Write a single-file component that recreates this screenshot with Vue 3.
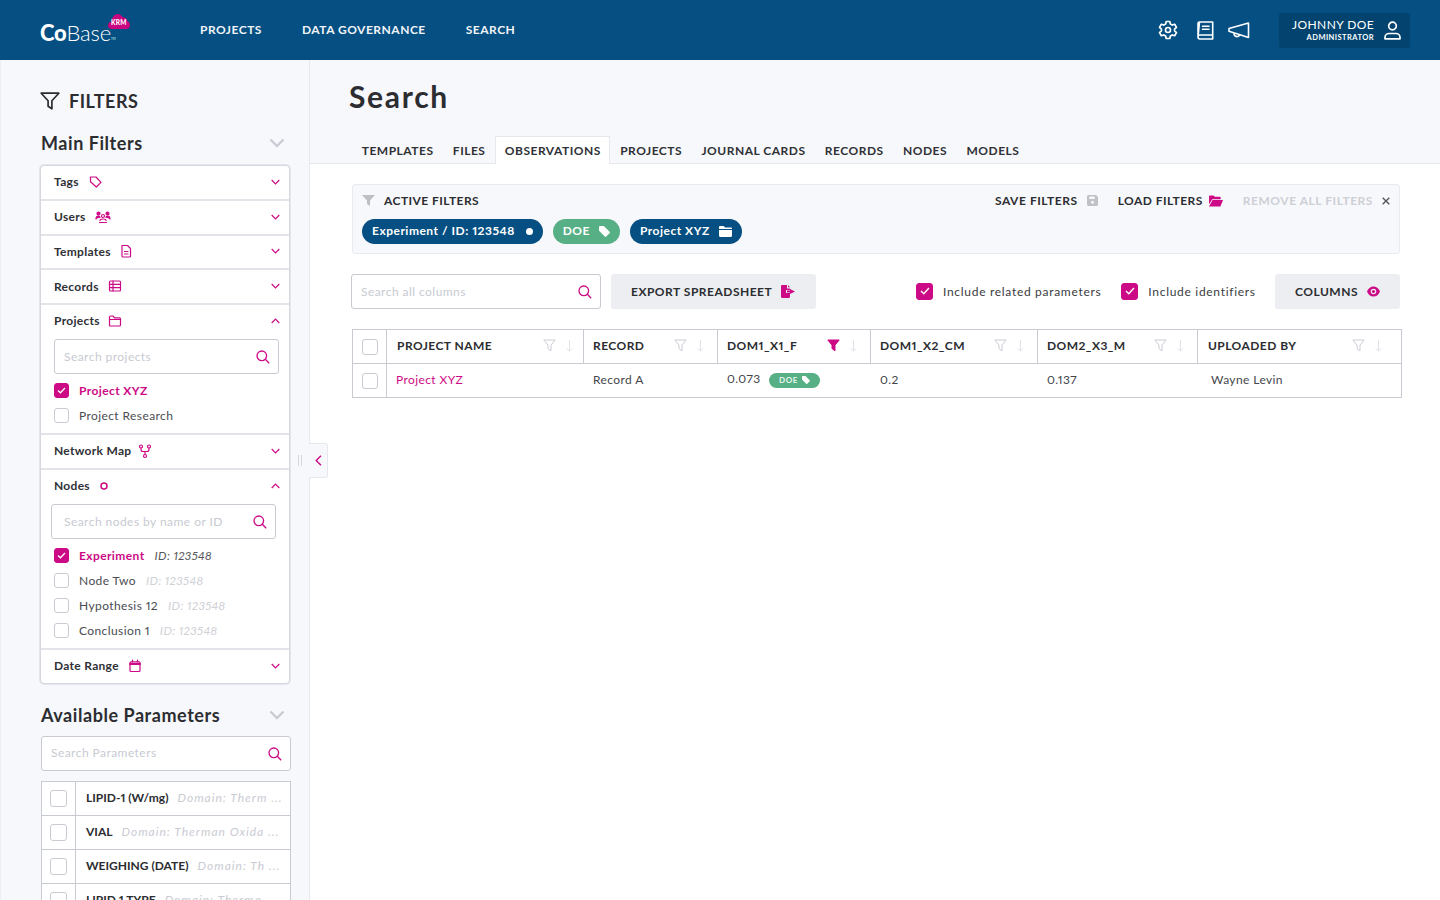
<template>
  <div class="app">
    <header class="topbar">
      <div class="logo">
        <span class="logo-text"><b>Co</b>Base</span><span class="logo-tm">TM</span>
        <span class="logo-cloud">
          <svg width="22" height="16" viewBox="0 0 22 16"><path d="M0 11.500C0 9.300 1.400 7.800 3.400 7.400 4 3.200 6.800 0 9.800 0c2.200 0 3.800 1.300 4.700 3.200 2.600-.3 4.600 1.500 5 4 1.500.5 2.500 2 2.500 3.700 0 2.400-1.800 4.100-4 4.100H3.800C1.700 15 0 13.500 0 11.500z" fill="#c9057f"/></svg>
          <span class="krm">KRM</span>
        </span>
      </div>
      <nav class="main-nav">
        <a v-for="item in navItems" :key="item">{{ item }}</a>
      </nav>
      <div class="top-icons">
        <svg class="gear" width="20" height="20" viewBox="0 0 24 24" fill="none" stroke="#fff" stroke-width="2" stroke-linejoin="round"><circle cx="12" cy="12" r="3"/><path d="M9.800 1.800h4.400l.6 3 2.300 1.300 2.900-1 2.200 3.800-2.300 2v2.200l2.300 2-2.200 3.800-2.900-1-2.300 1.300-.6 3H9.800l-.6-3-2.300-1.300-2.900 1-2.200-3.800 2.300-2v-2.200l-2.300-2 2.200-3.800 2.900 1 2.300-1.300z"/></svg>
        <svg class="book" width="17" height="19" viewBox="0 0 17 19" fill="none" stroke="#fff" stroke-width="1.600" stroke-linejoin="round" stroke-linecap="round"><path d="M2.500 1h13.200v13H2.900C1.800 14 1 14.800 1 15.800S1.800 18 2.900 18h12.800v-4M1 15.800V2.500C1 1.700 1.700 1 2.500 1z"/><path d="M5.500 5.300h6.500M5.500 8.300h6.500"/></svg>
        <svg class="horn" width="22" height="17" viewBox="0 0 22 17" fill="none" stroke="#fff" stroke-width="1.600" stroke-linejoin="round"><path d="M20.500 1v14.500L1 9.300V6.500z"/><path d="M6 11c0 2.300 1.300 3.600 3 3.600 1.400 0 2.400-.8 2.700-2"/></svg>
        <div class="user-box">
          <div class="user-text">
            <div class="user-name">JOHNNY DOE</div>
            <div class="user-role">ADMINISTRATOR</div>
          </div>
          <svg width="17" height="19" viewBox="0 0 17 19" fill="none" stroke="#fff" stroke-width="1.700"><circle cx="8.500" cy="5" r="3.800"/><path d="M1 17.800v-1.300c0-2.500 2-4 4-4h7c2 0 4 1.500 4 4v1.300z" stroke-linejoin="round"/></svg>
        </div>
      </div>
    </header>

    <div class="body">
      <aside class="sidebar">
        <h2 class="filters-title">
          <svg width="20" height="18" viewBox="0 0 20 18" fill="none" stroke="#2b2d31" stroke-width="1.700" stroke-linejoin="round"><path d="M1.200 1.200h17.600l-6.900 7.600v8l-3.800-2.600V8.800z"/></svg>
          FILTERS
        </h2>
        <div class="section-head main-head">
          <span>Main Filters</span>
          <svg width="16" height="10" viewBox="0 0 16 10" fill="none" stroke="#c9ccd4" stroke-width="2.400"><path d="M1.500 1.500L8 8l6.500-6.500"/></svg>
        </div>

        <div class="filter-panel">
          <div v-for="group in filterGroups" :key="group.name" class="filter-group">
            <div class="group-head">
              <span class="group-name">{{ group.name }}</span>
              <svg class="group-icon" :style="{ marginLeft: group.gap + 'px' }" :width="group.w || 16" height="16" :viewBox="`0 0 ${group.w || 16} 16`" fill="none" stroke="#cc0a85" stroke-width="1.200" stroke-linejoin="round" stroke-linecap="round" v-html="group.icon"></svg>
              <svg class="chev" width="9" height="6" viewBox="0 0 9 6" fill="none" stroke="#cc0a85" stroke-width="1.200">
                <path :d="group.items ? 'M.7 5L4.500 1.200 8.300 5' : 'M.7 1L4.500 4.800 8.300 1'"/>
              </svg>
            </div>
            <div v-if="group.items" class="group-body">
              <label class="search-box" :class="{ shifted: group.shifted }">
                <span class="placeholder">{{ group.placeholder }}</span>
                <svg class="search-ico" width="14" height="14" viewBox="0 0 14 14" fill="none" stroke="#cc0a85" stroke-width="1.300"><circle cx="5.800" cy="5.800" r="4.800"/><path d="M9.300 9.300l3.900 3.900"/></svg>
              </label>
              <div class="check-list">
                <div v-for="it in group.items" :key="it.label" class="check-row" :class="{ on: it.on }">
                  <span class="box" :class="{ checked: it.on }">
                    <svg v-if="it.on" width="9" height="7" viewBox="0 0 9 7" fill="none" stroke="#fff" stroke-width="1.300"><path d="M1 3.500l2.400 2.300L8 1"/></svg>
                  </span>
                  <span class="check-label">{{ it.label }}</span>
                  <em v-if="it.id" class="check-id">{{ it.id }}</em>
                </div>
              </div>
            </div>
          </div>
        </div>

        <div class="section-head avail-head">
          <span>Available Parameters</span>
          <svg width="16" height="10" viewBox="0 0 16 10" fill="none" stroke="#c9ccd4" stroke-width="2.400"><path d="M1.500 1.500L8 8l6.500-6.500"/></svg>
        </div>
        <label class="search-box param-search">
          <span class="placeholder">Search Parameters</span>
          <svg class="search-ico" width="14" height="14" viewBox="0 0 14 14" fill="none" stroke="#cc0a85" stroke-width="1.300"><circle cx="5.800" cy="5.800" r="4.800"/><path d="M9.300 9.300l3.900 3.900"/></svg>
        </label>
        <div class="param-list">
          <div v-for="p in params" :key="p.name" class="param-row">
            <div class="param-check"><span class="box big"></span></div>
            <div class="param-text"><b>{{ p.name }}</b><em>{{ p.domain }}</em></div>
          </div>
        </div>
        <div class="grip"></div>
        <button class="collapse">
          <svg width="7" height="11" viewBox="0 0 7 11" fill="none" stroke="#cc0a85" stroke-width="1.400"><path d="M6 .8L1.200 5.500 6 10.200"/></svg>
        </button>
      </aside>

      <main class="content">
        <div class="page-head">
          <h1>Search</h1>
          <div class="tabs">
            <a v-for="tab in tabs" :key="tab" class="tab" :class="{ active: tab === 'OBSERVATIONS' }">{{ tab }}</a>
          </div>
        </div>

        <div class="page-body">
          <section class="active-filters">
            <div class="af-top">
              <svg width="13" height="11" viewBox="0 0 13 11"><path d="M0 0h13L8 5.500V11L5 9V5.500z" fill="#bdbfc4"/></svg>
              <span class="af-title">ACTIVE FILTERS</span>
              <div class="af-actions">
                <span class="af-act">SAVE FILTERS
                  <svg width="11" height="11" viewBox="0 0 11 11"><path d="M1.500 0H9l2 2v7.500c0 .8-.7 1.500-1.500 1.500h-8C.7 11 0 10.300 0 9.500v-8C0 .7.700 0 1.500 0z" fill="#bfc1c6"/><rect x="2.300" y="1.500" width="5.500" height="2.500" fill="#f7f8fc"/><circle cx="5.500" cy="7.300" r="1.500" fill="#f7f8fc"/></svg>
                </span>
                <span class="af-act load">LOAD FILTERS
                  <svg width="14" height="12" viewBox="0 0 15 12"><path d="M0 1.200C0 .5.500 0 1.200 0h3.600l1.500 1.500h5c.7 0 1.200.5 1.200 1.200V4H3.500L0 9.500z" fill="#cc0a85"/><path d="M3.800 5H15l-2.800 7H0z" fill="#cc0a85"/></svg>
                </span>
                <span class="af-act off">REMOVE ALL FILTERS
                  <svg width="8" height="8" viewBox="0 0 8 8" stroke="#55575c" stroke-width="1.400"><path d="M.7.700l6.600 6.600M7.300.700L.7 7.300"/></svg>
                </span>
              </div>
            </div>
            <div class="chips">
              <span class="chip navy">Experiment / ID: 123548 <i class="dot"></i></span>
              <span class="chip green">DOE
                <svg width="11" height="11" viewBox="0 0 11 11"><path d="M0 1.200C0 .5.500 0 1.200 0h3.600l5.800 5.800c.4.400.4 1 0 1.400l-3.400 3.400c-.4.400-1 .4-1.400 0L0 4.800z" fill="#fff"/></svg>
              </span>
              <span class="chip navy">Project XYZ
                <svg width="13" height="11" viewBox="0 0 13 11"><path d="M0 1.200C0 .5.500 0 1.200 0h3.500L6 1.500h5.800c.7 0 1.200.5 1.200 1.200v.3H0z" fill="#fff"/><path d="M0 4h13v5.800c0 .7-.5 1.200-1.200 1.200H1.200C.5 11 0 10.500 0 9.800z" fill="#fff"/></svg>
              </span>
            </div>
          </section>

          <div class="toolbar">
            <label class="search-box all-search">
              <span class="placeholder">Search all columns</span>
              <svg class="search-ico" width="14" height="14" viewBox="0 0 14 14" fill="none" stroke="#cc0a85" stroke-width="1.300"><circle cx="5.800" cy="5.800" r="4.800"/><path d="M9.300 9.300l3.900 3.900"/></svg>
            </label>
            <button class="grey-btn export">EXPORT SPREADSHEET
              <svg width="14" height="13" viewBox="0 0 14 13"><path d="M0 1.200C0 .5.500 0 1.200 0H6v3.500h3V5H5v3h4v3.800c0 .7-.5 1.200-1.200 1.200H1.200C.5 13 0 12.500 0 11.800z" fill="#cc0a85"/><path d="M7 0l2 2.200H7zM9 4l5 2.500L9 9V7.500H6v-2h3z" fill="#cc0a85"/></svg>
            </button>
            <div class="toggle first"><span class="box checked lg"><svg width="10" height="8" viewBox="0 0 10 8" fill="none" stroke="#fff" stroke-width="1.400"><path d="M1 4l2.800 2.700L9 1"/></svg></span>Include related parameters</div>
            <div class="toggle second"><span class="box checked lg"><svg width="10" height="8" viewBox="0 0 10 8" fill="none" stroke="#fff" stroke-width="1.400"><path d="M1 4l2.800 2.700L9 1"/></svg></span>Include identifiers</div>
            <button class="grey-btn columns">COLUMNS
              <svg width="14" height="11" viewBox="0 0 14 11"><path d="M7 0c3.200 0 5.800 2.200 7 5.500C12.800 8.800 10.200 11 7 11S1.200 8.800 0 5.500C1.200 2.200 3.800 0 7 0z" fill="#cc0a85"/><circle cx="7" cy="5.500" r="3" fill="#eceef2"/><circle cx="7" cy="5.500" r="1.700" fill="#cc0a85"/></svg>
            </button>
          </div>

          <table class="grid">
            <colgroup>
              <col v-for="w in colWidths" :key="w.k" :style="{ width: w.v + 'px' }">
            </colgroup>
            <thead>
              <tr>
                <th class="chk"><span class="box big"></span></th>
                <th v-for="col in columns" :key="col.name">
                  <div class="th-in">
                    <span>{{ col.name }}</span>
                    <span class="th-icons">
                      <svg width="13" height="13" viewBox="0 0 13 13" :fill="col.active ? '#cc0a85' : 'none'" :stroke="col.active ? '#cc0a85' : '#c9ccd4'" stroke-width="1" stroke-linejoin="round"><path d="M.8 1h11.400L8 6.200v5.600L5 9.600V6.200z"/></svg>
                      <svg width="7" height="12" viewBox="0 0 7 12" fill="none" stroke="#e0e2e7" stroke-width="1"><path d="M3.500 0v11M.7 8.300l2.800 2.900 2.800-2.900"/></svg>
                    </span>
                  </div>
                </th>
              </tr>
            </thead>
            <tbody>
              <tr>
                <td class="chk"><span class="box big"></span></td>
                <td class="link">Project XYZ</td>
                <td>Record A</td>
                <td>0.073 <span class="mini-tag">DOE
                  <svg width="8" height="8" viewBox="0 0 11 11"><path d="M0 1.200C0 .5.500 0 1.200 0h3.600l5.800 5.800c.4.400.4 1 0 1.400l-3.400 3.400c-.4.400-1 .4-1.400 0L0 4.800z" fill="#fff"/></svg></span></td>
                <td>0.2</td>
                <td>0.137</td>
                <td class="uploader">Wayne Levin</td>
              </tr>
            </tbody>
          </table>
        </div>
      </main>
    </div>
  </div>
</template>

<script setup>
const navItems = ['PROJECTS', 'DATA GOVERNANCE', 'SEARCH']
const tabs = ['TEMPLATES', 'FILES', 'OBSERVATIONS', 'PROJECTS', 'JOURNAL CARDS', 'RECORDS', 'NODES', 'MODELS']

const filterGroups = [
  { name: 'Tags', gap: 9, icon: '<path d="M2.500 3h5.500l5 5.300-4.700 4.700-5.800-5.300z"/>' },
  { name: 'Users', gap: 9, w: 16, icon: '<circle cx="3.500" cy="4.500" r="1.500" fill="#cc0a85"/><circle cx="12.500" cy="4.500" r="1.500" fill="#cc0a85"/><circle cx="8" cy="7" r="1.500"/><path d="M1 10c0-2 1-3 2.500-3S5 7.500 5 8.500M15 10c0-2-1-3-2.500-3S11 7.500 11 8.500" fill="#cc0a85"/><path d="M4.500 13.500h7M5 11.500c0-1 1-1.500 3-1.500s3 .5 3 1.500"/>' },
  { name: 'Templates', gap: 7, icon: '<path d="M4 2.500h5.500L12.500 5.500V13c0 .6-.4 1-1 1H5c-.6 0-1-.4-1-1z"/><path d="M6.500 8.500h3.500M6.500 11h3.500"/>' },
  { name: 'Records', gap: 8, icon: '<rect x="2.500" y="3" width="11" height="10" rx="1"/><path d="M2.500 6.300h11M2.500 9.700h11M6 3v10"/>' },
  {
    name: 'Projects', gap: 7, placeholder: 'Search projects',
    icon: '<path d="M2.500 4c0-.6.400-1 1-1H6l1.500 1.800h5c.6 0 1 .4 1 1V12c0 .6-.4 1-1 1h-9c-.6 0-1-.4-1-1z"/><path d="M2.500 6.500h11"/>',
    items: [{ label: 'Project XYZ', on: true }, { label: 'Project Research' }]
  },
  { name: 'Network Map', gap: 5, icon: '<circle cx="4" cy="3.500" r="1.500"/><circle cx="12" cy="3.500" r="1.500"/><circle cx="8" cy="13" r="1.500"/><path d="M4 5v1.500c0 1 1 2 2 2h4c1 0 2-1 2-2V5M8 8.500v3"/>' },
  {
    name: 'Nodes', gap: 6, placeholder: 'Search nodes by name or ID', shifted: true,
    icon: '<circle cx="8" cy="8" r="3" stroke-width="1.500"/>',
    items: [
      { label: 'Experiment', id: 'ID: 123548', on: true },
      { label: 'Node Two', id: 'ID: 123548' },
      { label: 'Hypothesis 12', id: 'ID: 123548' },
      { label: 'Conclusion 1', id: 'ID: 123548' }
    ]
  },
  { name: 'Date Range', gap: 8, icon: '<rect x="3" y="3.800" width="10" height="9.700" rx="1"/><path d="M3 6h10" stroke-width="2"/><path d="M5.500 2v2M10.500 2v2"/>' }
]

const params = [
  { name: 'LIPID-1 (W/mg)', domain: 'Domain: Therm ...' },
  { name: 'VIAL', domain: 'Domain: Therman Oxida ...' },
  { name: 'WEIGHING (DATE)', domain: 'Domain: Th ...' },
  { name: 'LIPID 1 TYPE', domain: 'Domain: Therma ...' }
]

const columns = [
  { name: 'PROJECT NAME' },
  { name: 'RECORD' },
  { name: 'DOM1_X1_F', active: true },
  { name: 'DOM1_X2_CM' },
  { name: 'DOM2_X3_M' },
  { name: 'UPLOADED BY' }
]
const colWidths = [34, 197, 134, 153, 167, 160, 204].map((v, k) => ({ v, k }))
</script>

<style>
html, body { margin: 0; background: #fff; }
</style>

<style scoped>
.app {
  width: 1440px;
  height: 900px;
  overflow: hidden;
  font-family: Lato, "Noto Sans", sans-serif;
  font-variant-numeric: proportional-nums;
  color: #2b2d31;
}
.topbar {
  height: 60px;
  background: #054f82;
  display: flex;
  align-items: center;
  color: #fff;
}
.logo {
  position: relative;
  width: 160px;
  margin-left: 40px;
  height: 60px;
  display: flex;
  align-items: center;
}
.logo-text {
  font-size: 22px;
  font-weight: 300;
  padding-top: 5px;
  letter-spacing: -0.2px;
}
.logo-text b { font-weight: 900; }
.logo-tm { font-size: 3px; margin-top: 17px; color: #cfe; }
.logo-cloud {
  position: absolute;
  left: 68px;
  top: 14px;
  width: 22px;
  height: 16px;
}
.krm {
  position: absolute;
  left: 3px;
  top: 5px;
  font-size: 6.500px;
  font-weight: 900;
  letter-spacing: .2px;
  line-height: 8px;
}
.main-nav { display: flex; gap: 40px; padding-bottom: 2px; }
.main-nav a {
  font-size: 12px;
  font-weight: 700;
  letter-spacing: .5px;
  color: #f1f4f8;
}
.top-icons {
  margin-left: auto;
  margin-right: 30px;
  display: flex;
  align-items: center;
}
.book { margin-left: 19px; }
.horn { margin-left: 14px; }
.user-box {
  margin-left: 29px;
  width: 131px;
  height: 35px;
  background: #03436f;
  border-radius: 3px;
  display: flex;
  align-items: center;
  justify-content: flex-end;
  padding-right: 9px;
  box-sizing: border-box;
  gap: 10px;
}
.user-text { text-align: right; }
.user-name { font-size: 12px; letter-spacing: .4px; line-height: 15px; font-weight: 400; }
.user-role { font-size: 7.500px; letter-spacing: .45px; line-height: 11px; font-weight: 700; }

.body { display: flex; height: 840px; }
.sidebar {
  position: relative;
  width: 310px;
  flex: none;
  box-sizing: border-box;
  padding: 0 18px 0 40px;
  background: #f7f8fc;
  border-left: 1px solid #eceef3;
  border-right: 1px solid #e6e8ee;
}
.filters-title {
  margin: 31px 0 0 -1px;
  display: flex;
  align-items: center;
  gap: 9px;
  height: 20px;
  font-size: 18px;
  font-weight: 700;
  letter-spacing: .5px;
  color: #2b2d31;
}
.section-head {
  display: flex;
  justify-content: space-between;
  align-items: center;
  font-size: 18px;
  font-weight: 700;
  letter-spacing: .55px;
  padding-right: 6px;
  height: 24px;
}
.main-head { margin-top: 20px; }
.avail-head { margin-top: 19px; }
.filter-panel {
  margin-top: 10px;
  margin-left: -1px;
  width: 250px;
  box-sizing: border-box;
  background: #fff;
  border: 1px solid #d6d8df;
  border-radius: 4px;
  box-shadow: 0 0 0 1px #e4e6ec;
}
.filter-group + .filter-group { border-top: 2px solid #e2e4ea; }
.group-head {
  box-sizing: border-box;
  height: 32.750px;
  padding: 0 9px 1px 13px;
  display: flex;
  align-items: center;
}
.group-name { font-size: 12px; font-weight: 700; letter-spacing: .3px; color: #2f3136; }
.chev { margin-left: auto; }
.group-body { padding: 1.250px 10px 5px 13px; }
.search-box {
  position: relative;
  display: flex;
  align-items: center;
  box-sizing: border-box;
  height: 35px;
  background: #fff;
  border: 1px solid #c9cbd3;
  border-radius: 3px;
  padding-left: 9px;
}
.search-box.shifted { margin-left: -3px; margin-right: 3px; padding-left: 12px; }
.placeholder { font-size: 12px; letter-spacing: .45px; color: #c8cad2; font-weight: 400; }
.search-ico { position: absolute; right: 8px; top: 10px; }
.check-list { margin-top: 4px; }
.check-row { display: flex; align-items: center; height: 25px; font-size: 12px; letter-spacing: .4px; color: #4a4c52; }
.check-row.on { color: #cc0a85; font-weight: 700; }
.box {
  box-sizing: border-box;
  flex: none;
  width: 15px;
  height: 15px;
  border: 1px solid #c9cbd3;
  border-radius: 3px;
  background: #fff;
  display: inline-flex;
  align-items: center;
  justify-content: center;
}
.box.checked { background: #cc0a85; border-color: #cc0a85; }
.box.big { width: 16px; height: 16px; }
.box.lg { width: 17px; height: 17px; }
.check-label { margin-left: 10px; }
.check-id { margin-left: 10px; font-style: italic; font-weight: 400; color: #cfd1d7; letter-spacing: .35px; }
.check-row.on .check-id { color: #55575c; }

.param-search { margin-top: 9px; height: 35px; padding: 0 0 2px 9px; }
.param-list {
  margin-top: 10px;
  border: 1px solid #c9cbd3;
  background: #fff;
}
.param-row { display: flex; height: 33px; }
.param-row + .param-row { border-top: 1px solid #c9cbd3; }
.param-check {
  width: 33px;
  flex: none;
  border-right: 1px solid #c9cbd3;
  display: flex;
  align-items: center;
  justify-content: center;
}
.param-check .box { width: 17px; height: 17px; }
.param-text {
  padding: 0 8px 2px 10px;
  display: flex;
  align-items: center;
  gap: 9px;
  white-space: nowrap;
  overflow: hidden;
  font-size: 12px;
}
.param-text b { font-weight: 700; letter-spacing: 0; }
.param-text em { color: #c9cbd3; letter-spacing: 1px; }
.grip {
  position: absolute;
  left: 297px;
  top: 395px;
  width: 2px;
  height: 11px;
  border-left: 1px solid #d6d8de;
  border-right: 1px solid #d6d8de;
}
.collapse {
  position: absolute;
  left: 308px;
  top: 383px;
  z-index: 2;
  width: 19px;
  height: 35px;
  padding: 0;
  background: #f7f8fc;
  border: 1px solid #e6e8ee;
  border-left: none;
  border-radius: 0 3px 3px 0;
  display: flex;
  align-items: center;
  justify-content: center;
}

.content { flex: 1; min-width: 0; }
.page-head {
  height: 104px;
  box-sizing: border-box;
  background: #f7f8fc;
  border-bottom: 1px solid #e6e8ee;
  padding: 18px 0 0 39px;
  position: relative;
}
h1 {
  margin: 0;
  font-size: 30px;
  line-height: 36px;
  font-weight: 700;
  letter-spacing: 1.700px;
  color: #2b2d31;
}
.tabs {
  display: flex;
  position: absolute;
  left: 42px;
  bottom: -1px;
}
.tab {
  height: 27px;
  line-height: 27px;
  padding: 0 8.700px;
  font-size: 12px;
  font-weight: 700;
  letter-spacing: .5px;
  color: #2f3136;
  border: 1px solid transparent;
  border-bottom: none;
}
.tab.active { background: #fff; border-color: #e6e8ee; }

.page-body { padding: 20px 38px 0 42px; }
.active-filters {
  height: 70px;
  box-sizing: border-box;
  width: 1048px;
  background: #f7f8fc;
  border: 1px solid #e9ebf0;
  border-radius: 3px;
  padding: 0 9px;
}
.af-top { display: flex; align-items: center; height: 31px; padding-bottom: 2px; }
.af-title { margin-left: 9px; font-size: 12px; font-weight: 700; letter-spacing: .45px; }
.af-actions { margin-left: auto; display: flex; align-items: center; gap: 20px; }
.af-act {
  display: flex;
  align-items: center;
  gap: 9px;
  font-size: 12px;
  font-weight: 700;
  letter-spacing: .55px;
}
.af-act.load { gap: 6px; letter-spacing: .45px; }
.af-act.off { color: #cdcfd5; }
.chips { display: flex; gap: 10px; margin-top: 1px; }
.chip {
  box-sizing: border-box;
  height: 25px;
  border-radius: 13px;
  display: inline-flex;
  align-items: center;
  gap: 9px;
  padding: 0 10px 2px;
  font-size: 12px;
  font-weight: 700;
  letter-spacing: .5px;
  color: #fff;
}
.chip svg, .dot { position: relative; top: 1px; }
.chip.navy { background: #054f82; }
.chip.green { background: #57b085; }
.dot { width: 7px; height: 7px; border-radius: 50%; background: #fff; margin-left: 2px; }

.toolbar { display: flex; align-items: center; margin: 20px 2px 0 -1px; }
.all-search { width: 250px; }
.grey-btn {
  height: 35px;
  padding: 0 20px;
  border: none;
  border-radius: 3px;
  background: #eceef2;
  font-family: inherit;
  font-size: 12px;
  font-weight: 700;
  letter-spacing: .5px;
  color: #2b2d31;
  display: inline-flex;
  align-items: center;
  gap: 9px;
}
.export { margin-left: 10px; width: 205px; padding-right: 0; }
.toggle {
  display: flex;
  align-items: center;
  gap: 10px;
  padding-bottom: 1px;
  font-size: 12px;
  letter-spacing: .7px;
  color: #3a3c41;
}
.toggle.first { margin-left: 100px; }
.toggle.second { margin-left: 20px; }
.columns { margin-left: auto; width: 125px; }

.grid {
  margin-top: 20px;
  width: 1049px;
  table-layout: fixed;
  border-collapse: collapse;
  font-size: 12px;
}
.grid th, .grid td { border: 1px solid #c9cbd3; padding: 0 10px 2px 9px; height: 34px; box-sizing: border-box; text-align: left; }
.grid th { font-weight: 700; letter-spacing: .45px; color: #2b2d31; }
.grid th:nth-child(2), .grid th:last-child { padding-left: 10px; }
.grid td { letter-spacing: .4px; color: #44464b; border-left-color: transparent; border-right-color: transparent; font-weight: 400; }
.grid .chk { padding: 0; text-align: center; line-height: 0; }
.grid td.chk { border-right-color: #c9cbd3; border-left-color: #c9cbd3; }
.grid td:last-child { border-right-color: #c9cbd3; }
.grid td.link { color: #cc0a85; border-left-color: #c9cbd3; }
.grid td.uploader { padding-left: 13px; }
.th-in { display: flex; align-items: center; justify-content: space-between; }
.th-icons { display: inline-flex; align-items: center; gap: 10px; margin-right: 3px; }
.grid th:nth-child(2) .th-icons { margin-right: 0; }
.grid th:last-child .th-icons { margin-right: 9px; }
.mini-tag {
  display: inline-flex;
  align-items: center;
  gap: 4px;
  height: 15px;
  margin-left: 5px;
  padding: 0 10px;
  border-radius: 8px;
  background: #57b085;
  color: #e9f6ef;
  font-size: 8px;
  font-weight: 700;
  letter-spacing: .6px;
  vertical-align: middle;
}
</style>
